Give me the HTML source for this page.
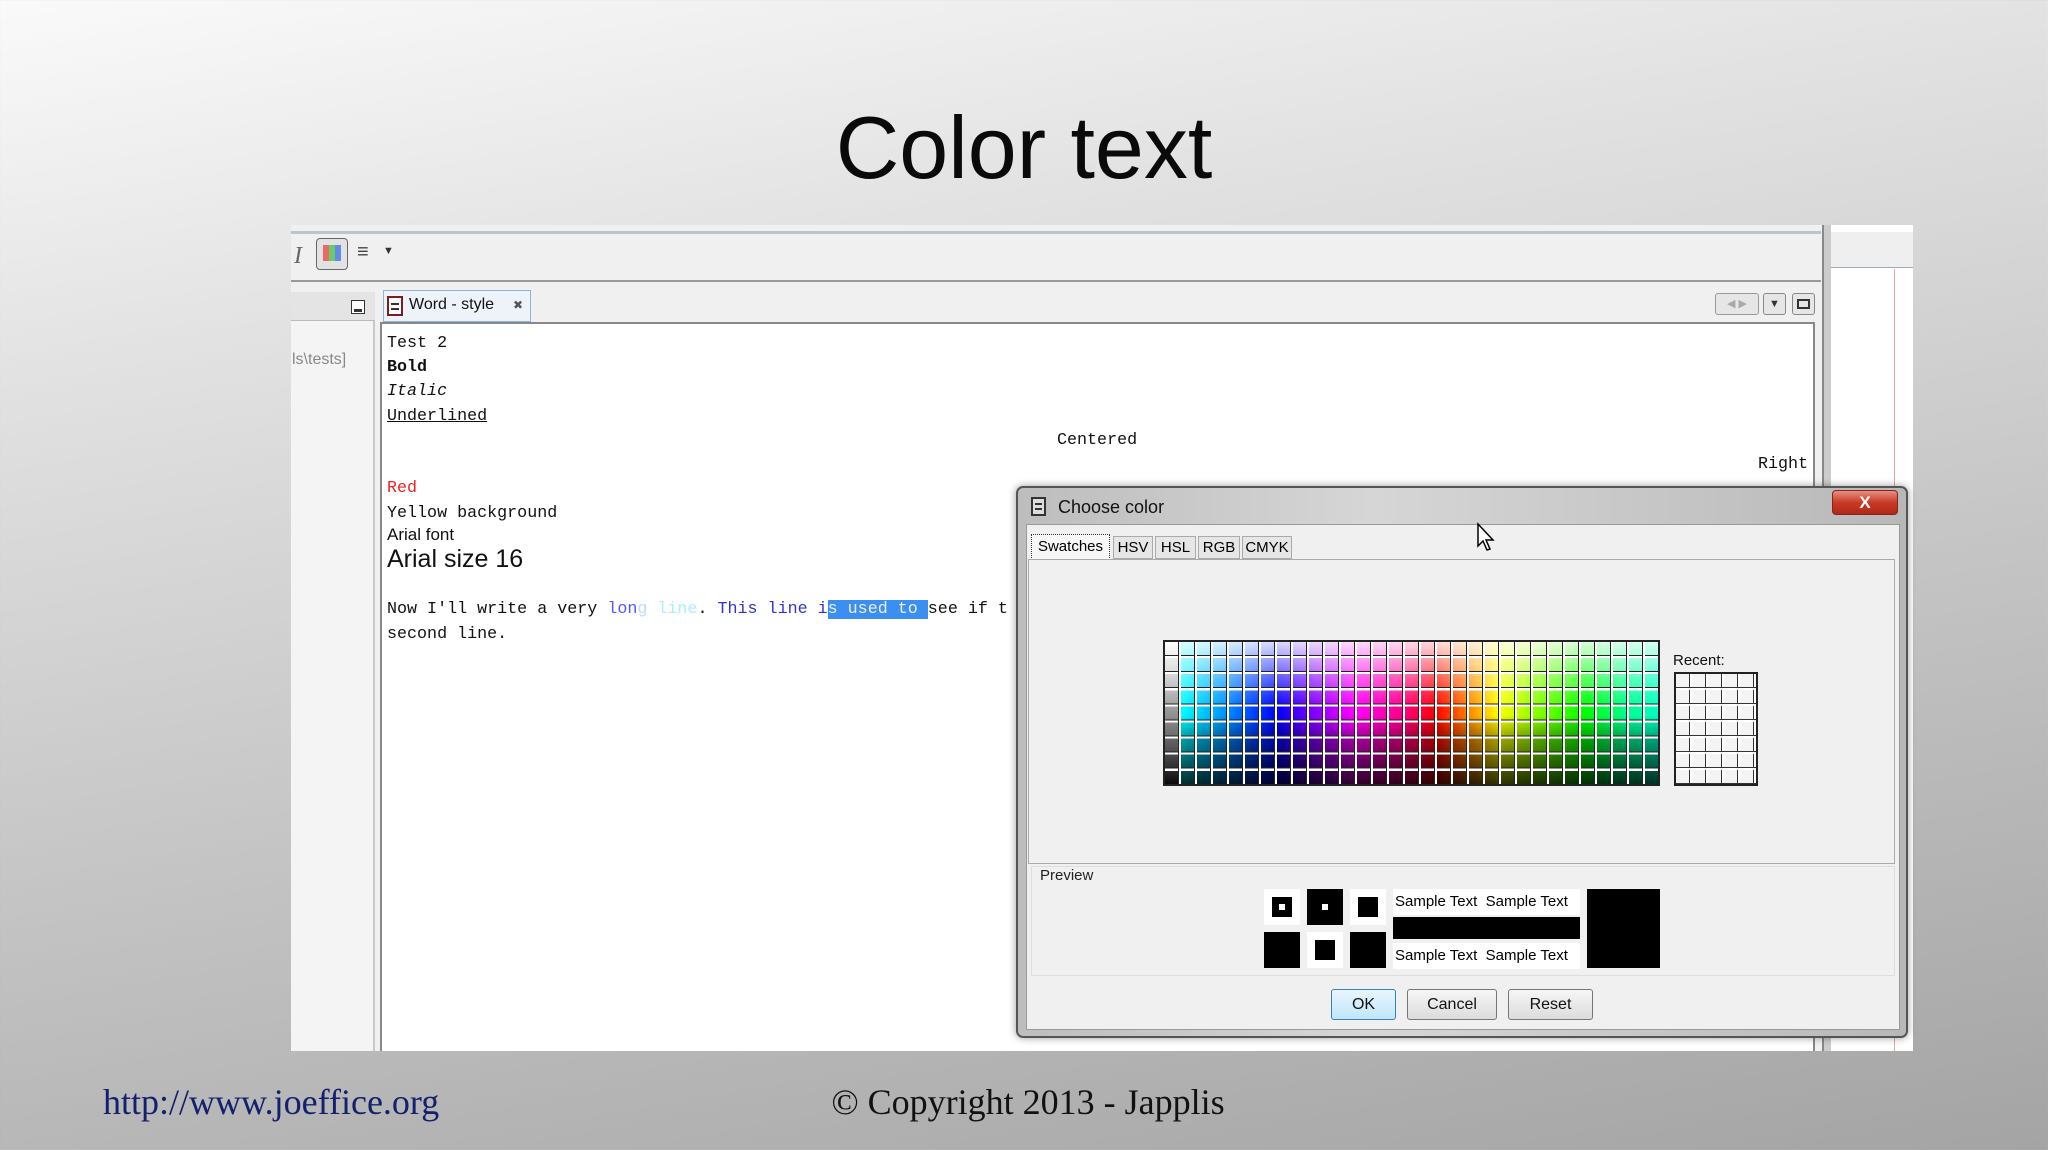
<!DOCTYPE html>
<html><head><meta charset="utf-8"><style>
*{margin:0;padding:0;box-sizing:border-box}
body{width:2048px;height:1150px;overflow:hidden;position:relative;font-family:"Liberation Sans",sans-serif;
background:linear-gradient(170deg,#fafafa 0%,#e2e2e2 25%,#c4c4c4 60%,#a4a4a4 100%);}
.a{position:absolute}
.mono{font-family:"Liberation Mono",monospace;font-size:16.7px;color:#111;white-space:pre}
.btn{position:absolute;top:989px;height:31px;border:1px solid #777;border-radius:3px;background:linear-gradient(#f6f6f6,#dcdcdc);font-size:16px;text-align:center;line-height:29px;color:#111}
</style></head><body>
<div class="a" style="left:0;width:2048px;top:98px;text-align:center;font-size:88px;color:#0a0a0a;line-height:100px">Color text</div>

<div class="a" style="left:291px;top:225px;width:1622px;height:826px;background:#f0f0f0;overflow:hidden">
  <div class="a" style="left:0;top:6px;width:1530px;height:3px;background:#bcc3cc"></div>
  <div class="a" style="left:3px;top:18px;font-family:'Liberation Serif',serif;font-style:italic;font-size:24px;color:#666">I</div>
  <div class="a" style="left:25px;top:13px;width:32px;height:32px;border:1px solid #666;border-radius:4px;background:#e2e2e2"></div>
  <div class="a" style="left:32px;top:20px;width:18px;height:16px;background:linear-gradient(90deg,#e66 33%,#6c6 33%,#6c6 66%,#68e 66%)"></div>
  <div class="a" style="left:66px;top:16px;font-size:20px;color:#444">≡</div>
  <div class="a" style="left:92px;top:20px;font-size:11px;color:#333">▼</div>
  <div class="a" style="left:0;top:55px;width:1530px;height:2px;background:#999"></div>
  <div class="a" style="left:0;top:67px;width:84px;height:759px;background:#f4f4f4;border-right:2px solid #c8c8c8"></div>
  <div class="a" style="left:0;top:67px;width:84px;height:29px;background:#e4e4e4;border-bottom:1px solid #bbb"></div>
  <div class="a" style="left:60px;top:75px;width:14px;height:14px;border:1px solid #333;background:#fff"><div style="margin:8px 2px 0;height:3px;background:#333"></div></div>
  <div class="a" style="left:1px;top:126px;font-size:16px;color:#888">ls\tests]</div>
  <div class="a" style="left:92px;top:65px;width:148px;height:32px;border:1px solid #8fb3d8;background:#eef3f9"></div>
  <div class="a" style="left:96px;top:71px;width:16px;height:20px;border:2px solid #7a1e1e;background:#fff"><div style="margin:5px 2px 0;height:2px;background:#333"></div><div style="margin:3px 2px 0;height:2px;background:#333"></div></div>
  <div class="a" style="left:118px;top:71px;font-size:16px;color:#111">Word - style</div>
  <div class="a" style="left:222px;top:73px;font-size:12px;color:#555">✖</div>
  <div class="a" style="left:1424px;top:68px;width:44px;height:22px;border:1px solid #999;border-radius:3px;background:#e6e6e6;font-size:11px;color:#aaa;line-height:20px;text-align:center">◀ ▶</div>
  <div class="a" style="left:1472px;top:68px;width:23px;height:22px;border:1px solid #888;border-radius:3px;background:#e6e6e6;font-size:11px;color:#333;line-height:20px;text-align:center">▼</div>
  <div class="a" style="left:1501px;top:68px;width:23px;height:22px;border:1px solid #888;border-radius:3px;background:#e6e6e6"><div style="margin:5px 4px;height:10px;border:2px solid #333"></div></div>
  <div class="a" style="left:89px;top:97px;width:1435px;height:740px;background:#fff;border:2px solid #888"></div>
  <div class="a" style="left:1531px;top:0;width:9px;height:826px;background:#ccc;border-left:2px solid #888"></div>
  <div class="a" style="left:1540px;top:0;width:82px;height:826px;background:#fff"></div>
  <div class="a" style="left:1540px;top:7px;width:82px;height:36px;background:#efefef;border-bottom:1px solid #9ab"></div>
  <div class="a" style="left:1603px;top:44px;width:1px;height:782px;background:#f0a0a0"></div>
</div>
<div class="mono a" style="left:387px;top:334px">Test 2</div>
<div class="mono a" style="left:387px;top:358px;font-weight:bold">Bold</div>
<div class="mono a" style="left:387px;top:382px;font-style:italic">Italic</div>
<div class="mono a" style="left:387px;top:407px;text-decoration:underline">Underlined</div>
<div class="mono a" style="left:1057px;top:431px">Centered</div>
<div class="mono a" style="left:1758px;top:455px">Right</div>
<div class="mono a" style="left:387px;top:479px;color:#e22">Red</div>
<div class="mono a" style="left:387px;top:504px">Yellow background</div>
<div class="a" style="left:387px;top:525px;font-size:17px;color:#111">Arial font</div>
<div class="a" style="left:387px;top:545px;font-size:25px;color:#111">Arial size 16</div>
<div class="mono a" style="left:387px;top:600px">Now I'll write a very <span style="color:#55f">lon</span><span style="color:#bdf">g</span> <span style="color:#aef">line</span>. <span style="color:#33c">This line i</span><span style="background:#3a8ff0;color:#eef">s used to </span>see if t</div>
<div class="mono a" style="left:387px;top:625px">second line.</div>

<div class="a" style="left:1016px;top:486px;width:892px;height:552px;border:2px solid #555;border-radius:7px;background:linear-gradient(90deg,#bdbdbd,#d6d6d6 40%,#b8b8b8);box-shadow:0 0 8px rgba(0,0,0,.4)"></div>
<div class="a" style="left:1031px;top:497px;width:15px;height:19px;border:2px solid #333;background:#ddd"><div style="margin:4px 2px 0;height:2px;background:#333"></div><div style="margin:3px 2px 0;height:2px;background:#333"></div></div>
<div class="a" style="left:1058px;top:497px;font-size:18px;color:#111">Choose color</div>
<div class="a" style="left:1832px;top:490px;width:66px;height:25px;border:1px solid #822;border-radius:4px;background:linear-gradient(#e89080,#c83a28 50%,#b02818);color:#fff;font-weight:bold;font-size:17px;text-align:center;line-height:23px">X</div>
<div class="a" style="left:1026px;top:524px;width:874px;height:506px;background:#f0f0f0;border:1px solid #999"></div>
<div class="a" style="left:1031px;top:534px;width:79px;height:26px;border:1px dotted #333;background:#f7f7f7;font-size:15px;line-height:24px;text-align:center">Swatches</div>
<div class="a" style="left:1113px;top:536px;width:40px;height:23px;border:1px solid #aaa;background:#e6e6e6;font-size:15px;line-height:22px;text-align:center">HSV</div>
<div class="a" style="left:1155px;top:536px;width:41px;height:23px;border:1px solid #aaa;background:#e6e6e6;font-size:15px;line-height:22px;text-align:center">HSL</div>
<div class="a" style="left:1198px;top:536px;width:42px;height:23px;border:1px solid #aaa;background:#e6e6e6;font-size:15px;line-height:22px;text-align:center">RGB</div>
<div class="a" style="left:1242px;top:536px;width:50px;height:23px;border:1px solid #aaa;background:#e6e6e6;font-size:15px;line-height:22px;text-align:center">CMYK</div>
<div class="a" style="left:1028px;top:559px;width:867px;height:305px;border:1px solid #aaa;background:#f0f0f0"></div>
<div class="a" style="left:1163px;top:640px;width:497px;height:146px;border:2px solid #222;background:#000;overflow:hidden">
  <div class="a" style="left:0;top:0;width:16px;height:146px;background:linear-gradient(#fff,#ddd 20%,#aaa 40%,#777 60%,#333 85%,#000)"></div>
  <div class="a" style="left:16px;top:0;width:481px;height:146px;background:linear-gradient(90deg,#0ff 0%,#08f 10%,#00f 20%,#80f 28%,#f0f 36%,#f08 46%,#f00 53%,#f80 60%,#ff0 66%,#8f0 74%,#0f0 84%,#0f8 92%,#0fc 100%)"></div>
  <div class="a" style="left:16px;top:0;width:481px;height:146px;background:linear-gradient(rgba(255,255,255,.85),rgba(255,255,255,.35) 25%,rgba(255,255,255,0) 45%,rgba(0,0,0,0) 50%,rgba(0,0,0,.35) 65%,rgba(0,0,0,.85) 100%)"></div>
  <div class="a" style="left:0;top:0;width:497px;height:146px;background:repeating-linear-gradient(90deg,transparent 0 13px,#222 13px 14px,#fff 14px 16px),repeating-linear-gradient(transparent 0 13px,#222 13px 14px,#fff 14px 16.1px)"></div>
</div>
<div class="a" style="left:1673px;top:652px;font-size:15px;color:#111">Recent:</div>
<div class="a" style="left:1674px;top:672px;width:84px;height:114px;border:2px solid #222;background:repeating-linear-gradient(90deg,#f4f4f4 0 13px,#333 13px 14px,#fff 14px 16px),#fff"></div>
<div class="a" style="left:1676px;top:674px;width:80px;height:110px;background:repeating-linear-gradient(transparent 0 13px,#333 13px 14px,#fff 14px 16px)"></div>
<div class="a" style="left:1031px;top:866px;width:864px;height:110px;border:1px solid #ddd"></div>
<div class="a" style="left:1036px;top:867px;font-size:15px;color:#222;background:#f0f0f0;padding:0 4px">Preview</div>
<div class="a" style="left:1264px;top:889px;width:36px;height:36px;background:#fff"><div style="margin:8px;width:20px;height:20px;background:#000;padding:7px"><div style="width:6px;height:6px;background:#fff"></div></div></div>
<div class="a" style="left:1307px;top:889px;width:36px;height:36px;background:#000"><div style="margin:15px;width:6px;height:6px;background:#fff"></div></div>
<div class="a" style="left:1350px;top:889px;width:36px;height:36px;background:#fff"><div style="margin:8px;width:20px;height:20px;background:#000"></div></div>
<div class="a" style="left:1264px;top:932px;width:36px;height:36px;background:#000"></div>
<div class="a" style="left:1307px;top:932px;width:36px;height:36px;background:#fff"><div style="margin:8px;width:20px;height:20px;background:#000"></div></div>
<div class="a" style="left:1350px;top:932px;width:36px;height:36px;background:#000"></div>
<div class="a" style="left:1393px;top:889px;width:187px;height:26px;background:#fff;font-size:15px;line-height:26px;padding-left:2px;white-space:pre">Sample Text  Sample Text</div>
<div class="a" style="left:1393px;top:917px;width:187px;height:22px;background:#000"></div>
<div class="a" style="left:1393px;top:943px;width:187px;height:26px;background:#fff;font-size:15px;line-height:26px;padding-left:2px;white-space:pre">Sample Text  Sample Text</div>
<div class="a" style="left:1587px;top:889px;width:73px;height:79px;background:#000"></div>
<div class="btn" style="left:1331px;width:65px;border-color:#3c7fb1;background:linear-gradient(#eaf6fd,#bee6fd)">OK</div>
<div class="btn" style="left:1407px;width:90px">Cancel</div>
<div class="btn" style="left:1508px;width:85px">Reset</div>
<svg class="a" style="left:1476px;top:522px" width="20" height="30" viewBox="0 0 20 30"><path d="M2 2 L2 24 L7 19 L11 28 L14 27 L10 18 L17 18 Z" fill="#fff" stroke="#000" stroke-width="1.5"/></svg>

<div class="a" style="left:103px;top:1081px;font-family:'Liberation Serif',serif;font-size:36px;color:#14206e">http://www.joeffice.org</div>
<div class="a" style="left:0;width:2056px;top:1081px;text-align:center;font-family:'Liberation Serif',serif;font-size:36px;color:#111">© Copyright 2013 - Japplis</div>
</body></html>
